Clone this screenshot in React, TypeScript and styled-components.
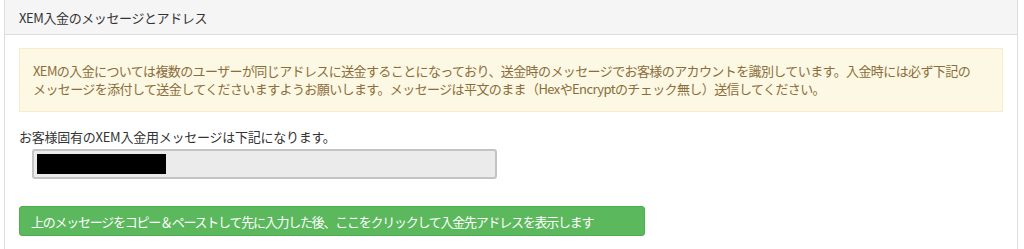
import * as React from 'react';
import styled, { createGlobalStyle } from 'styled-components';

const GlobalStyle = createGlobalStyle`
  body {
    margin: 0;
    background: #fff;
    font-family: "Noto Sans CJK JP", "Noto Sans", sans-serif;
    color: #333;
  }
`;

const Panel = styled.section`
  margin-left: 4px;
  width: 1012px;
  border: 1px solid #ddd;
  border-top: none;
  background: #fff;
`;

const PanelHeading = styled.div`
  height: 35px;
  box-sizing: border-box;
  padding: 0 14px;
  display: flex;
  align-items: center;
  background: #f5f5f5;
  border-bottom: 1px solid #ddd;
  font-size: 13px;
  letter-spacing: -0.4px;
  color: #333;
`;

const PanelBody = styled.div`
  padding: 13px 14px 20px;
  display: flex;
  flex-direction: column;
`;

const Alert = styled.div`
  padding: 13px 13px;
  background: #fcf8e3;
  border: 1px solid #faebcc;
  color: #8a6d3b;
  font-size: 13px;
  letter-spacing: -0.6px;
  line-height: 18px;
  white-space: nowrap;
`;

const Label = styled.p`
  margin: 16px 0 3px;
  font-size: 13px;
  letter-spacing: -0.25px;
  line-height: 18px;
  color: #333;
`;

const MessageField = styled.div`
  margin-left: 13px;
  width: 465px;
  height: 30px;
  box-sizing: border-box;
  padding: 3px;
  background: #ebebeb;
  border: 2px solid #c4c4c4;
  border-radius: 3px;
  display: flex;
`;

const Redaction = styled.span`
  width: 129px;
  background: #000;
`;

const ShowButton = styled.button`
  align-self: flex-start;
  margin-top: 27px;
  width: 626px;
  height: 30px;
  padding: 0 11px;
  text-align: left;
  background: #5cb85c;
  border: 1px solid #4cae4c;
  border-radius: 3px;
  color: #fff;
  font-family: inherit;
  font-size: 13px;
  letter-spacing: -1.25px;
  cursor: pointer;
`;

const App: React.FunctionComponent = () => {
  return (
    <>
      <GlobalStyle />
      <Panel>
        <PanelHeading>XEM入金のメッセージとアドレス</PanelHeading>
        <PanelBody>
          <Alert>
            XEMの入金については複数のユーザーが同じアドレスに送金することになっており、送金時のメッセージでお客様のアカウントを識別しています。入金時には必ず下記の
            <br />
            メッセージを添付して送金してくださいますようお願いします。メッセージは平文のまま（HexやEncryptのチェック無し）送信してください。
          </Alert>
          <Label>お客様固有のXEM入金用メッセージは下記になります。</Label>
          <MessageField>
            <Redaction />
          </MessageField>
          <ShowButton>上のメッセージをコピー＆ペーストして先に入力した後、ここをクリックして入金先アドレスを表示します</ShowButton>
        </PanelBody>
      </Panel>
    </>
  );
};

export default App;
